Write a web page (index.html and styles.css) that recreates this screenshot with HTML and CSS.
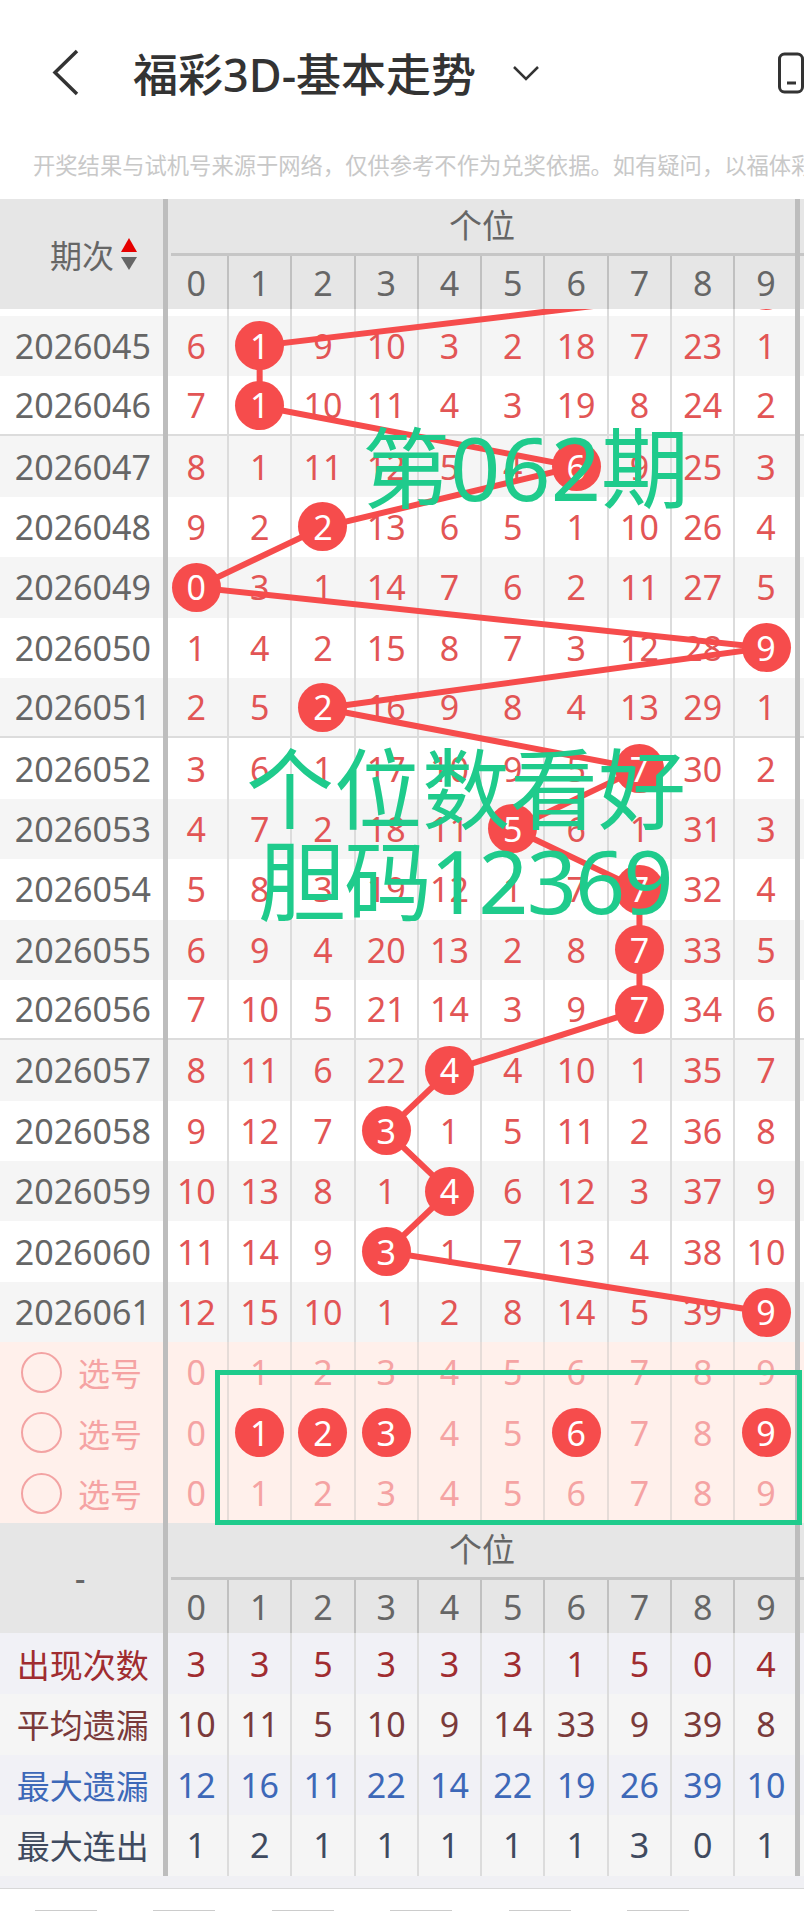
FILE: index.html
```html
<!DOCTYPE html>
<html lang="zh-CN">
<head>
    <meta charset="UTF-8">
    <title>福彩3D-基本走势</title>
    <link rel="stylesheet" href="styles.css">
</head>
<body>
<div class="page">
    <div class="nav">
        <svg class="back" width="28" height="48" viewBox="0 0 28 48"><polyline points="25,2 3,23.5 25,45" /></svg>
        <div class="title">福彩3D-基本走势</div>
        <svg class="caret" width="26" height="16" viewBox="0 0 26 16"><polyline points="1,2 13,14 25,2" /></svg>
        <svg class="phone" width="26" height="42" viewBox="0 0 26 42"><rect x="1.5" y="2" width="23" height="38" rx="5" /><line x1="9" y1="31" x2="18" y2="31" /></svg>
    </div>
    <div class="note">开奖结果与试机号来源于网络，仅供参考不作为兑奖依据。如有疑问，以福体彩</div>

    <div class="table">
        <div class="thead">
            <div class="th-side"><span>期次</span>
                <svg class="sort" width="16" height="32" viewBox="0 0 16 32"><polygon class="up" points="0,14 8,0 16,14" /><polygon class="down" points="0,19 16,19 8,32" /></svg>
            </div>
            <div class="th-main">
                <div class="th-title">个位</div>
                <div class="nums"><span>0</span><span>1</span><span>2</span><span>3</span><span>4</span><span>5</span><span>6</span><span>7</span><span>8</span><span>9</span></div>
            </div>
        </div>

        <div class="rows">
            <div class="row stub"><span></span><span></span><span></span><span></span><span></span><span></span><span></span><span></span><span></span><span></span><span></span></div>
            <div class="row alt"><span>2026045</span><span>6</span><span><em>1</em></span><span>9</span><span>10</span><span>3</span><span>2</span><span>18</span><span>7</span><span>23</span><span>1</span></div>
            <div class="row sep"><span>2026046</span><span>7</span><span><em>1</em></span><span>10</span><span>11</span><span>4</span><span>3</span><span>19</span><span>8</span><span>24</span><span>2</span></div>
            <div class="row alt"><span>2026047</span><span>8</span><span>1</span><span>11</span><span>12</span><span>5</span><span>4</span><span><em>6</em></span><span>9</span><span>25</span><span>3</span></div>
            <div class="row"><span>2026048</span><span>9</span><span>2</span><span><em>2</em></span><span>13</span><span>6</span><span>5</span><span>1</span><span>10</span><span>26</span><span>4</span></div>
            <div class="row alt"><span>2026049</span><span><em>0</em></span><span>3</span><span>1</span><span>14</span><span>7</span><span>6</span><span>2</span><span>11</span><span>27</span><span>5</span></div>
            <div class="row"><span>2026050</span><span>1</span><span>4</span><span>2</span><span>15</span><span>8</span><span>7</span><span>3</span><span>12</span><span>28</span><span><em>9</em></span></div>
            <div class="row alt sep"><span>2026051</span><span>2</span><span>5</span><span><em>2</em></span><span>16</span><span>9</span><span>8</span><span>4</span><span>13</span><span>29</span><span>1</span></div>
            <div class="row"><span>2026052</span><span>3</span><span>6</span><span>1</span><span>17</span><span>10</span><span>9</span><span>5</span><span><em>7</em></span><span>30</span><span>2</span></div>
            <div class="row alt"><span>2026053</span><span>4</span><span>7</span><span>2</span><span>18</span><span>11</span><span><em>5</em></span><span>6</span><span>1</span><span>31</span><span>3</span></div>
            <div class="row"><span>2026054</span><span>5</span><span>8</span><span>3</span><span>19</span><span>12</span><span>1</span><span>7</span><span><em>7</em></span><span>32</span><span>4</span></div>
            <div class="row alt"><span>2026055</span><span>6</span><span>9</span><span>4</span><span>20</span><span>13</span><span>2</span><span>8</span><span><em>7</em></span><span>33</span><span>5</span></div>
            <div class="row sep"><span>2026056</span><span>7</span><span>10</span><span>5</span><span>21</span><span>14</span><span>3</span><span>9</span><span><em>7</em></span><span>34</span><span>6</span></div>
            <div class="row alt"><span>2026057</span><span>8</span><span>11</span><span>6</span><span>22</span><span><em>4</em></span><span>4</span><span>10</span><span>1</span><span>35</span><span>7</span></div>
            <div class="row"><span>2026058</span><span>9</span><span>12</span><span>7</span><span><em>3</em></span><span>1</span><span>5</span><span>11</span><span>2</span><span>36</span><span>8</span></div>
            <div class="row alt"><span>2026059</span><span>10</span><span>13</span><span>8</span><span>1</span><span><em>4</em></span><span>6</span><span>12</span><span>3</span><span>37</span><span>9</span></div>
            <div class="row"><span>2026060</span><span>11</span><span>14</span><span>9</span><span><em>3</em></span><span>1</span><span>7</span><span>13</span><span>4</span><span>38</span><span>10</span></div>
            <div class="row alt"><span>2026061</span><span>12</span><span>15</span><span>10</span><span>1</span><span>2</span><span>8</span><span>14</span><span>5</span><span>39</span><span><em>9</em></span></div>

            <svg class="trend" width="804" height="1034" viewBox="0 309 804 1034">
                <polyline points="766,285.4 259.65,345.8 259.65,406.2 576.15,466.6 322.95,527 196.35,587.4 766.05,647.8 322.95,708.2 639.45,768.6 512.85,829 639.45,889.4 639.45,949.8 639.45,1010.2 449.55,1070.6 386.25,1131 449.55,1191.4 386.25,1251.8 766.05,1312.2" />
                <circle cx="766" cy="285.4" r="24.5" />
            </svg>
        </div>

        <div class="row pick"><span><i></i>选号</span><span>0</span><span>1</span><span>2</span><span>3</span><span>4</span><span>5</span><span>6</span><span>7</span><span>8</span><span>9</span></div>
        <div class="row pick"><span><i></i>选号</span><span>0</span><span><em>1</em></span><span><em>2</em></span><span><em>3</em></span><span>4</span><span>5</span><span><em>6</em></span><span>7</span><span>8</span><span><em>9</em></span></div>
        <div class="row pick"><span><i></i>选号</span><span>0</span><span>1</span><span>2</span><span>3</span><span>4</span><span>5</span><span>6</span><span>7</span><span>8</span><span>9</span></div>

        <div class="thead">
            <div class="th-side dash">-</div>
            <div class="th-main">
                <div class="th-title">个位</div>
                <div class="nums"><span>0</span><span>1</span><span>2</span><span>3</span><span>4</span><span>5</span><span>6</span><span>7</span><span>8</span><span>9</span></div>
            </div>
        </div>

        <div class="row stat count"><span>出现次数</span><span>3</span><span>3</span><span>5</span><span>3</span><span>3</span><span>3</span><span>1</span><span>5</span><span>0</span><span>4</span></div>
        <div class="row stat avg"><span>平均遗漏</span><span>10</span><span>11</span><span>5</span><span>10</span><span>9</span><span>14</span><span>33</span><span>9</span><span>39</span><span>8</span></div>
        <div class="row stat most"><span>最大遗漏</span><span>12</span><span>16</span><span>11</span><span>22</span><span>14</span><span>22</span><span>19</span><span>26</span><span>39</span><span>10</span></div>
        <div class="row stat run"><span>最大连出</span><span>1</span><span>2</span><span>1</span><span>1</span><span>1</span><span>1</span><span>1</span><span>3</span><span>0</span><span>1</span></div>
    </div>

    <div class="strip"></div>
    <div class="tabs"><b></b><b></b><b></b><b></b><b></b><b></b></div>

    <div class="stamp one">第062期</div>
    <div class="stamp two">个位数看好</div>
    <div class="stamp three">胆码12369</div>
    <div class="box"></div>
</div>
</body>
</html>
```
FILE: styles.css
```css
* {
    box-sizing: border-box;
}

body {
    margin: 0;
    background: #fff;
    font-family: "Noto Sans", "Noto Sans CJK SC", sans-serif;
}

.page {
    position: relative;
    width: 804px;
    height: 1911px;
    overflow: hidden;
}

/* top bar */
.nav {
    display: flex;
    align-items: center;
    height: 146px;
    padding-left: 52px;
}

.nav svg {
    flex: none;
    fill: none;
    stroke: #333;
}

.back {
    stroke-width: 3.5;
}

.title {
    margin: -2px 0 0 53px;
    font-size: 45px;
    font-weight: 500;
    color: #333;
    white-space: nowrap;
}

.caret {
    margin-left: 37px;
    stroke-width: 2.5;
}

.phone {
    margin-left: 239px;
    stroke-width: 3;
}

.note {
    height: 40px;
    margin-bottom: 13px;
    padding-left: 33px;
    font-size: 22.3px;
    line-height: 40px;
    color: #c8c8c8;
    white-space: nowrap;
}

/* table */
.table {
    position: relative;
    font-size: 34px;
    font-weight: 380;
}

.table::before,
.table::after {
    content: "";
    position: absolute;
    top: 0;
    bottom: 0;
    z-index: 3;
    width: 5px;
    background: #bdbdbd;
}

.table::before {
    left: 163px;
}

.table::after {
    left: 795px;
}

.thead {
    display: flex;
    height: 110px;
    background: #e6e6e6;
    color: #666;
}

.th-side {
    display: flex;
    align-items: center;
    width: 165.7px;
    padding-left: 50px;
    font-size: 32px;
}

.sort {
    margin-left: 7px;
}

.sort .up {
    fill: #e60000;
}

.sort .down {
    fill: #666;
}

.dash {
    padding-left: 75px;
    font-weight: 500;
    line-height: 1;
}

.th-main {
    flex: 1;
}

.th-title {
    height: 57px;
    margin-left: 5.3px;
    padding-right: 11px;
    border-bottom: 3px solid #c6c6c6;
    font-size: 33px;
    line-height: 54px;
    text-align: center;
}

.nums {
    display: grid;
    grid-template-columns: repeat(10, 63.3px);
    height: 53px;
}

.nums span {
    display: flex;
    align-items: center;
    justify-content: center;
    border-right: 2px solid #c0c0c0;
}

.rows {
    position: relative;
}

.row {
    display: grid;
    grid-template-columns: 165.7px repeat(10, 63.3px);
    height: 60.4px;
    background: #fff;
    color: #e25555;
}

.row.alt {
    background: #f5f5f5;
}

.row.sep {
    border-bottom: 2px solid #dcdcdc;
}

.row.stub {
    height: 6.6px;
}

.row > span {
    display: flex;
    align-items: center;
    justify-content: center;
    border-right: 2px solid #dcdcdc;
}

.row > span:first-child {
    border-right: 0;
    color: #666;
}

.row em {
    position: relative;
    z-index: 2;
    display: flex;
    align-items: center;
    justify-content: center;
    width: 49px;
    height: 49px;
    border-radius: 50%;
    background: #f64c4c;
    color: #fff;
    font-style: normal;
}

.trend {
    position: absolute;
    top: 0;
    left: 0;
    z-index: 1;
    pointer-events: none;
}

.trend polyline {
    fill: none;
    stroke: #f64c4c;
    stroke-width: 6;
}

.trend circle {
    fill: #f64c4c;
}

/* number picker */
.pick {
    background: #fff0eb;
    color: #f5a3a3;
}

.pick > span {
    border-right-color: #e6dcd8;
}

.row.pick > span:first-child {
    justify-content: flex-start;
    padding-left: 21px;
    color: #f5a3a3;
    font-size: 32px;
}

.pick i {
    width: 41px;
    height: 41px;
    margin-right: 16px;
    border: 2.5px solid #f3a3a3;
    border-radius: 50%;
}

/* stats */
.stat {
    height: 60.6px;
    font-weight: 400;
}

.row.stat > span:first-child {
    font-size: 33px;
    color: inherit;
}

.count,
.most {
    background: #f1f1f6;
}

.avg,
.run {
    background: #f5f5f5;
}

.count {
    color: #a02c30;
}

.avg {
    color: #7a3a3a;
}

.most {
    color: #3d68b8;
}

.run {
    color: #3f4a5f;
}

/* bottom */
.strip {
    height: 13px;
    background: #f0f0f4;
    border-bottom: 1.5px solid #d8d8d8;
}

.tabs {
    display: flex;
    gap: 56.4px;
    margin-top: 21px;
    padding-left: 35px;
}

.tabs b {
    width: 62px;
    height: 2px;
    background: #ccc;
}

/* green notes drawn over the chart */
.stamp {
    position: absolute;
    z-index: 5;
    font-size: 88px;
    font-weight: 400;
    line-height: 1;
    color: #1fcb8c;
    white-space: nowrap;
}

.stamp.one {
    top: 423px;
    left: 362px;
}

.stamp.two {
    top: 744px;
    left: 246px;
}

.stamp.three {
    top: 836px;
    left: 258px;
    letter-spacing: -2px;
}

.box {
    position: absolute;
    top: 1370px;
    left: 215px;
    z-index: 5;
    width: 587px;
    height: 155px;
    border: 5px solid #1fcb8c;
}
```
